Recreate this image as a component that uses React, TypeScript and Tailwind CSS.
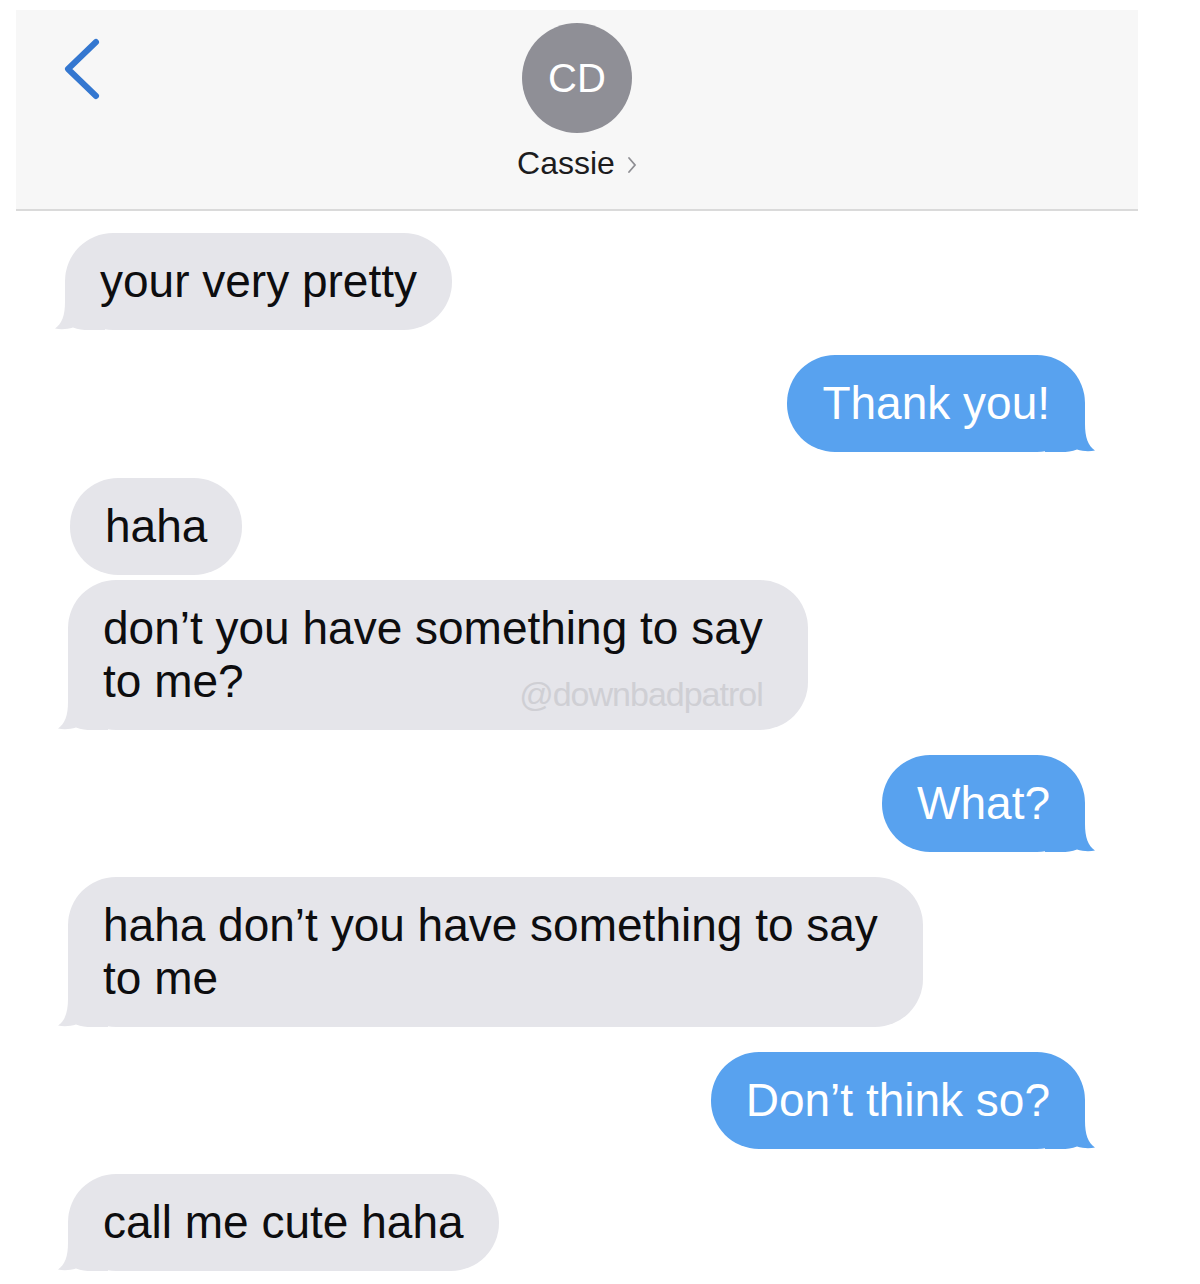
import type { ReactNode } from "react";

const FONT = { fontFamily: '"Liberation Sans", Arial, sans-serif' };

function Tail({ side, color }: { side: "left" | "right"; color: string }) {
  return (
    <svg
      viewBox="0 0 50 48"
      className={`pointer-events-none absolute bottom-0 h-[48px] w-[50px] ${
        side === "left" ? "-left-[10px]" : "-right-[10px] -scale-x-100"
      }`}
    >
      <path
        d="M10 0 H50 V48 H34 C28 48 23 47.5 18 45.5 C12 47.5 5 47.5 0 46.5 C7 42 10 33 10 20 Z"
        fill={color}
      />
    </svg>
  );
}

function Bubble({
  side,
  tail = true,
  className = "",
  children,
}: {
  side: "left" | "right";
  tail?: boolean;
  className?: string;
  children: ReactNode;
}) {
  const isLeft = side === "left";
  const color = isLeft ? "#e5e5ea" : "#58a2ef";
  return (
    <div
      className={`relative whitespace-nowrap rounded-[48px] px-[35px] py-[22px] text-[46px] leading-[53px] ${
        isLeft ? "self-start bg-[#e5e5ea] text-[#0d0d0f]" : "self-end bg-[#58a2ef] text-white"
      } ${className}`}
    >
      {tail ? <Tail side={side} color={color} /> : null}
      <div className="relative">{children}</div>
    </div>
  );
}

export default function App() {
  return (
    <div className="min-h-[1284px] w-[1200px] bg-white pt-[10px]" style={FONT}>
      <header className="mx-[16px] grid h-[201px] w-[1122px] grid-cols-[1fr_auto_1fr] border-b-2 border-[#dadada] bg-[#f7f7f7]">
        <div className="pl-[46px] pt-[27px]">
          <svg viewBox="0 0 42 64" className="h-[64px] w-[42px]">
            <path
              d="M34 5 L6 32 L34 59"
              fill="none"
              stroke="#3477d0"
              strokeWidth="6"
              strokeLinecap="round"
              strokeLinejoin="round"
            />
          </svg>
        </div>
        <div className="flex flex-col items-center pt-[13px]">
          <div className="flex h-[110px] w-[110px] items-center justify-center rounded-full bg-[#8f8f96] text-[40px] text-white">
            CD
          </div>
          <div className="mt-[12px] flex items-center gap-[12px] text-[32px] leading-[36px] text-[#1c1c1e]">
            <span>Cassie</span>
            <svg viewBox="0 0 10 18" className="mt-[3px] h-[18px] w-[10px]">
              <path d="M2 2 L8 9 L2 16" fill="none" stroke="#8e8e93" strokeWidth="1.8" strokeLinecap="round" />
            </svg>
          </div>
        </div>
        <div />
      </header>

      <main className="flex flex-col pl-[68px] pr-[115px] pt-[22px]">
        <Bubble side="left" className="-ml-[3px]">your very pretty</Bubble>
        <Bubble side="right" className="mt-[25px]">Thank you!</Bubble>
        <Bubble side="left" tail={false} className="ml-[2px] mt-[26px] px-[33px]">haha</Bubble>
        <Bubble side="left" className="mt-[5px] pr-[45px]">
          <div>don’t you have something to say</div>
          <div className="flex items-end justify-between">
            <span>to me?</span>
            <span className="text-[34px] leading-[28px] tracking-[-1px] text-[#cfcfd4]">@downbadpatrol</span>
          </div>
        </Bubble>
        <Bubble side="right" className="mt-[25px]">What?</Bubble>
        <Bubble side="left" className="mt-[25px] pr-[45px]">
          <div>haha don’t you have something to say</div>
          <div>to me</div>
        </Bubble>
        <Bubble side="right" className="mt-[25px]">Don’t think so?</Bubble>
        <Bubble side="left" className="mt-[25px]">call me cute haha</Bubble>
      </main>
    </div>
  );
}
